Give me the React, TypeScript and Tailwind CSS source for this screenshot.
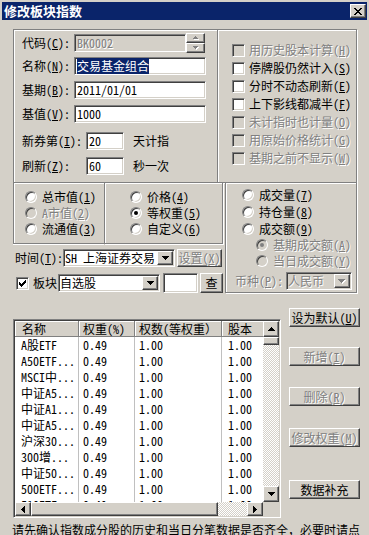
import React from "react";

const font = "font-['Noto_Sans_Mono_CJK_SC','Noto_Sans_CJK_SC',monospace]";
const sunken =
  "border border-t-[#808080] border-l-[#808080] border-b-white border-r-white shadow-[inset_1px_1px_0_#404040,inset_-1px_-1px_0_#d4d0c8]";
const raised =
  "border border-t-white border-l-white border-b-[#404040] border-r-[#404040] shadow-[inset_-1px_-1px_0_#808080]";
const dis = "text-[#808080] [text-shadow:1px_1px_0_#ffffff]";
const checker = "[background:repeating-conic-gradient(#d4d0c8_0_25%,#ffffff_0_50%)_0_0/2px_2px]";

type Dir = "up" | "down" | "left" | "right";

function Tri({ dir, gray, n = 4 }: { dir: Dir; gray?: boolean; n?: number }) {
  const vert = dir === "up" || dir === "down";
  const w = vert ? 2 * n - 1 : n;
  const h = vert ? n : 2 * n - 1;
  const rects: { x: number; y: number; w: number; h: number }[] = [];
  for (let i = 0; i < n; i++) {
    if (dir === "up") rects.push({ x: n - 1 - i, y: i, w: 2 * i + 1, h: 1 });
    else if (dir === "down") rects.push({ x: i, y: i, w: 2 * (n - 1 - i) + 1, h: 1 });
    else if (dir === "left") rects.push({ x: i, y: n - 1 - i, w: 1, h: 2 * i + 1 });
    else rects.push({ x: i, y: i, w: 1, h: 2 * (n - 1 - i) + 1 });
  }
  const off = gray ? 1 : 0;
  return (
    <svg width={w + off} height={h + off} viewBox={`0 0 ${w + off} ${h + off}`} shapeRendering="crispEdges">
      {gray && rects.map((r, i) => <rect key={"s" + i} x={r.x + 1} y={r.y + 1} width={r.w} height={r.h} fill="#ffffff" />)}
      {rects.map((r, i) => (
        <rect key={i} x={r.x} y={r.y} width={r.w} height={r.h} fill={gray ? "#808080" : "#000000"} />
      ))}
    </svg>
  );
}

function Check({ checked, disabled }: { checked?: boolean; disabled?: boolean }) {
  return (
    <span
      className={`flex h-[13px] w-[13px] shrink-0 items-center justify-center ${sunken} ${
        disabled ? "bg-[#d4d0c8]" : "bg-white"
      }`}
    >
      {checked && (
        <svg width="7" height="7" viewBox="0 0 7 7" shapeRendering="crispEdges">
          <path d="M0 2h1v3h-1zM1 3h1v3h-1zM2 4h1v3h-1zM3 3h1v3h-1zM4 2h1v3h-1zM5 1h1v3h-1zM6 0h1v3h-1z" fill="#000" />
        </svg>
      )}
    </span>
  );
}

function Radio({ checked, disabled }: { checked?: boolean; disabled?: boolean }) {
  return (
    <span
      className={`flex h-[12px] w-[12px] shrink-0 items-center justify-center rounded-full border border-t-[#808080] border-l-[#808080] border-b-white border-r-white shadow-[inset_1px_1px_0_#404040,inset_-1px_-1px_0_#d4d0c8] ${
        disabled ? "bg-[#d4d0c8]" : "bg-white"
      }`}
    >
      {checked && <span className={`h-[4px] w-[4px] rounded-full ${disabled ? "bg-[#808080]" : "bg-black"}`} />}
    </span>
  );
}

function Field({
  className,
  children,
  disabled,
}: {
  className: string;
  children?: React.ReactNode;
  disabled?: boolean;
}) {
  return (
    <div
      className={`flex shrink-0 items-center overflow-hidden whitespace-nowrap pl-[2px] ${sunken} ${
        disabled ? "bg-[#d4d0c8]" : "bg-white"
      } ${className}`}
    >
      {children}
    </div>
  );
}

function Combo({ className, text, disabled }: { className: string; text: string; disabled?: boolean }) {
  return (
    <div className={`flex shrink-0 items-stretch p-[1px] ${sunken} ${disabled ? "bg-[#d4d0c8]" : "bg-white"} ${className}`}>
      <span className={`flex flex-1 items-center whitespace-nowrap ${disabled ? dis : ""}`}>{text}</span>
      <span className={`flex w-[16px] shrink-0 items-center justify-center bg-[#d4d0c8] ${raised}`}>
        <Tri dir="down" gray={disabled} />
      </span>
    </div>
  );
}

function Btn({
  className,
  children,
  disabled,
}: {
  className: string;
  children: React.ReactNode;
  disabled?: boolean;
}) {
  return (
    <div
      className={`flex shrink-0 items-center justify-center whitespace-nowrap bg-[#d4d0c8] ${raised} ${
        disabled ? dis : ""
      } ${className}`}
    >
      {children}
    </div>
  );
}

function CheckRow({ label, checked, disabled }: { label: React.ReactNode; checked?: boolean; disabled?: boolean }) {
  return (
    <div className="flex h-[18px] items-center gap-[4px] whitespace-nowrap">
      <Check checked={checked} disabled={disabled} />
      <span className={disabled ? dis : ""}>{label}</span>
    </div>
  );
}

function RadioRow({
  label,
  checked,
  disabled,
  h = "h-[16px]",
}: {
  label: React.ReactNode;
  checked?: boolean;
  disabled?: boolean;
  h?: string;
}) {
  return (
    <div className={`flex items-center gap-[5px] whitespace-nowrap ${h}`}>
      <Radio checked={checked} disabled={disabled} />
      <span className={disabled ? dis : ""}>{label}</span>
    </div>
  );
}

const rows = [
  "A股ETF",
  "A50ETF...",
  "MSCI中...",
  "中证A5...",
  "中证A1...",
  "中证A5...",
  "沪深30...",
  "300增...",
  "中证50...",
  "500ETF...",
  "510ETF...",
];

export default function App() {
  return (
    <div
      className={`h-[535px] w-[369px] overflow-hidden bg-[#d4d0c8] text-[12px] leading-[16px] text-black ${font}`}
    >
      {/* title bar */}
      <div className="mx-[2px] mt-[2px] flex h-[18px] items-center justify-between bg-[#0a246a] pl-[2px] pr-[1px]">
        <span className="text-[13px] font-bold leading-[18px] text-white">修改板块指数</span>
        <div className={`flex h-[14px] w-[16px] items-center justify-center bg-[#d4d0c8] ${raised}`}>
          <svg width="8" height="7" viewBox="0 0 8 7" shapeRendering="crispEdges">
            <path
              d="M0 0h2v1h-2zM1 1h2v1h-2zM2 2h2v1h-2zM3 3h2v1h-2zM2 4h2v1h-2zM1 5h2v1h-2zM0 6h2v1h-2zM6 0h2v1h-2zM5 1h2v1h-2zM4 2h2v1h-2zM4 4h2v1h-2zM5 5h2v1h-2zM6 6h2v1h-2z"
              fill="#000"
            />
          </svg>
        </div>
      </div>

      <div className="flex flex-col pl-[13px]">
        {/* top groups */}
        <div className="mt-[9px] flex">
          <div className="flex h-[154px] w-[204px] flex-col border-b border-l border-t border-[#808080] pl-[8px] shadow-[inset_1px_1px_0_#fff,0_1px_0_#fff]">
            <div className="mt-[3px] flex h-[20px] items-center">
              <span className="w-[52px] shrink-0 whitespace-nowrap">
                代码(<u>C</u>):
              </span>
              <Field className="h-[18px] w-[112px]" disabled>
                <span className={dis}>BK0002</span>
              </Field>
              <div className="flex h-[20px] w-[19px] shrink-0 flex-col">
                <div className={`flex h-[10px] items-center justify-center bg-[#d4d0c8] ${raised}`}>
                  <Tri dir="up" n={3} gray />
                </div>
                <div className={`flex h-[10px] items-center justify-center bg-[#d4d0c8] ${raised}`}>
                  <Tri dir="down" n={3} gray />
                </div>
              </div>
            </div>
            <div className="mt-[4px] flex h-[18px] items-center">
              <span className="w-[52px] shrink-0 whitespace-nowrap">
                名称(<u>N</u>):
              </span>
              <Field className="h-[18px] w-[132px]">
                <span className="bg-[#0a246a] text-white">交易基金组合</span>
              </Field>
            </div>
            <div className="mt-[6px] flex h-[18px] items-center">
              <span className="w-[52px] shrink-0 whitespace-nowrap">
                基期(<u>B</u>):
              </span>
              <Field className="h-[18px] w-[132px]">2011/01/01</Field>
            </div>
            <div className="mt-[6px] flex h-[18px] items-center">
              <span className="w-[52px] shrink-0 whitespace-nowrap">
                基值(<u>V</u>):
              </span>
              <Field className="h-[18px] w-[132px]">1000</Field>
            </div>
            <div className="mt-[9px] flex h-[18px] items-center">
              <span className="w-[64px] shrink-0 whitespace-nowrap">
                新券第(<u>I</u>):
              </span>
              <Field className="h-[18px] w-[38px]">20</Field>
              <span className="ml-[9px] whitespace-nowrap">天计指</span>
            </div>
            <div className="mt-[7px] flex h-[18px] items-center">
              <span className="w-[64px] shrink-0 whitespace-nowrap">
                刷新(<u>Z</u>):
              </span>
              <Field className="h-[18px] w-[38px]">60</Field>
              <span className="ml-[9px] whitespace-nowrap">秒一次</span>
            </div>
          </div>
          <div className="flex h-[154px] w-[140px] flex-col border border-[#808080] pl-[14px] pt-[11px] shadow-[inset_1px_1px_0_#fff,1px_1px_0_#fff]">
            <CheckRow disabled label={<>用历史股本计算(<u>H</u>)</>} />
            <CheckRow label={<>停牌股仍然计入(<u>S</u>)</>} />
            <CheckRow label={<>分时不动态刷新(<u>E</u>)</>} />
            <CheckRow label={<>上下影线都减半(<u>F</u>)</>} />
            <CheckRow disabled label={<>未计指时也计量(<u>O</u>)</>} />
            <CheckRow disabled label={<>用原始价格统计(<u>G</u>)</>} />
            <CheckRow disabled label={<>基期之前不显示(<u>W</u>)</>} />
          </div>
        </div>

        {/* radio groups + time/board rows */}
        <div className="flex">
          <div className="flex w-[210px] flex-col">
            <div className="flex h-[61px]">
              <div className="flex w-[91px] flex-col border-b border-l border-[#808080] pl-[11px] pt-[6px] shadow-[inset_1px_1px_0_#fff,0_1px_0_#fff]">
                <RadioRow label={<>总市值(<u>1</u>)</>} />
                <RadioRow disabled label={<>A市值(<u>2</u>)</>} />
                <RadioRow label={<>流通值(<u>3</u>)</>} />
              </div>
              <div className="flex w-[119px] flex-col border-b border-l border-r border-[#808080] pl-[25px] pt-[6px] shadow-[inset_1px_1px_0_#fff,1px_1px_0_#fff]">
                <RadioRow label={<>价格(<u>4</u>)</>} />
                <RadioRow checked label={<>等权重(<u>5</u>)</>} />
                <RadioRow label={<>自定义(<u>6</u>)</>} />
              </div>
            </div>
            <div className="ml-[2px] mt-[5px] flex h-[18px] items-center">
              <span className="w-[48px] shrink-0 whitespace-nowrap">
                时间(<u>T</u>):
              </span>
              <Combo className="h-[18px] w-[112px]" text="SH 上海证券交易" />
              <Btn className="ml-[2px] h-[18px] w-[45px]" disabled>
                <span>
                  设置(<u>X</u>)
                </span>
              </Btn>
            </div>
            <div className="mt-[6px] flex h-[20px] items-center">
              <span className="ml-[3px]">
                <Check checked />
              </span>
              <span className="ml-[4px] mr-[1px] shrink-0 whitespace-nowrap">板块</span>
              <Combo className="h-[18px] w-[102px]" text="自选股" />
              <Field className="ml-[3px] h-[20px] w-[35px]" />
              <Btn className="ml-[2px] h-[20px] w-[23px]">查</Btn>
            </div>
          </div>
          <div className="ml-[2px] flex h-[110px] w-[132px] flex-col border-b border-l border-r border-[#808080] pl-[16px] pt-[3px] shadow-[inset_1px_1px_0_#fff,1px_1px_0_#fff]">
            <RadioRow h="h-[17px]" label={<>成交量(<u>7</u>)</>} />
            <RadioRow h="h-[17px]" label={<>持仓量(<u>8</u>)</>} />
            <RadioRow h="h-[17px]" label={<>成交额(<u>9</u>)</>} />
            <div className="pl-[14px]">
              <RadioRow disabled checked label={<>基期成交额(<u>A</u>)</>} />
              <RadioRow disabled label={<>当日成交额(<u>Y</u>)</>} />
            </div>
            <div className="-ml-[7px] mt-[3px] flex h-[18px] items-center">
              <span className={`mr-[3px] shrink-0 whitespace-nowrap ${dis}`}>
                币种(<u>P</u>):
              </span>
              <Combo className="h-[18px] w-[66px]" text="人民币" disabled />
            </div>
          </div>
        </div>

        {/* list + buttons */}
        <div className="mt-[15px] flex">
          <div className={`mt-[11px] flex h-[199px] w-[268px] flex-col bg-white p-[1px] ${sunken}`}>
            <div className="flex h-[181px]">
              <div className="flex w-[248px] flex-col overflow-hidden">
                <div className="flex h-[16px] shrink-0 whitespace-nowrap">
                  <div className="w-[64px] shrink-0 border-b border-r border-[#808080] bg-[#d4d0c8] pl-[7px] shadow-[inset_1px_1px_0_#fff]">
                    名称
                  </div>
                  <div className="w-[56px] shrink-0 border-b border-r border-[#808080] bg-[#d4d0c8] pl-[4px] shadow-[inset_1px_1px_0_#fff]">
                    权重(%)
                  </div>
                  <div className="w-[87px] shrink-0 border-b border-r border-[#808080] bg-[#d4d0c8] pl-[4px] shadow-[inset_1px_1px_0_#fff]">
                    权数(等权重）
                  </div>
                  <div className="w-[60px] shrink-0 border-b border-r border-[#808080] bg-[#d4d0c8] pl-[6px] shadow-[inset_1px_1px_0_#fff]">
                    股本
                  </div>
                </div>
                {rows.map((name, i) => (
                  <div key={i} className="flex h-[16px] shrink-0 whitespace-nowrap">
                    <div className="w-[64px] shrink-0 border-r border-[#c0c0c0] pl-[6px]">{name}</div>
                    <div className="w-[56px] shrink-0 border-r border-[#c0c0c0] pl-[4px]">0.49</div>
                    <div className="w-[87px] shrink-0 border-r border-[#c0c0c0] pl-[4px]">1.00</div>
                    <div className="w-[60px] shrink-0 border-r border-[#c0c0c0] pl-[6px]">1.00</div>
                  </div>
                ))}
              </div>
              <div className="flex w-[16px] flex-col">
                <div className={`flex h-[16px] shrink-0 items-center justify-center bg-[#d4d0c8] ${raised}`}>
                  <Tri dir="up" />
                </div>
                <div className={`h-[8px] shrink-0 bg-[#d4d0c8] ${raised}`} />
                <div className={`flex-1 ${checker}`} />
                <div className={`flex h-[16px] shrink-0 items-center justify-center bg-[#d4d0c8] ${raised}`}>
                  <Tri dir="down" />
                </div>
              </div>
            </div>
            <div className="flex h-[14px]">
              <div className="flex w-[248px]">
                <div className={`flex w-[16px] shrink-0 items-center justify-center bg-[#d4d0c8] ${raised}`}>
                  <Tri dir="left" />
                </div>
                <div className={`w-[187px] shrink-0 bg-[#d4d0c8] ${raised}`} />
                <div className={`flex-1 ${checker}`} />
                <div className={`flex w-[16px] shrink-0 items-center justify-center bg-[#d4d0c8] ${raised}`}>
                  <Tri dir="right" />
                </div>
              </div>
              <div className="w-[16px] bg-[#d4d0c8]" />
            </div>
          </div>
          <div className="ml-[8px] flex w-[71px] flex-col">
            <Btn className="h-[19px] w-[71px]">
              <span>
                设为默认(<u>U</u>)
              </span>
            </Btn>
            <Btn className="mt-[20px] h-[19px] w-[71px]" disabled>
              <span>
                新增(<u>I</u>)
              </span>
            </Btn>
            <Btn className="mt-[21px] h-[19px] w-[71px]" disabled>
              <span>
                删除(<u>R</u>)
              </span>
            </Btn>
            <Btn className="mt-[22px] h-[19px] w-[71px]" disabled>
              <span>
                修改权重(<u>M</u>)
              </span>
            </Btn>
            <Btn className="mt-[33px] h-[19px] w-[71px]">数据补充</Btn>
          </div>
        </div>

        <div className="-ml-[1px] mt-[4px] whitespace-nowrap">
          请先确认指数成分股的历史和当日分笔数据是否齐全，必要时请点
        </div>
      </div>
    </div>
  );
}
